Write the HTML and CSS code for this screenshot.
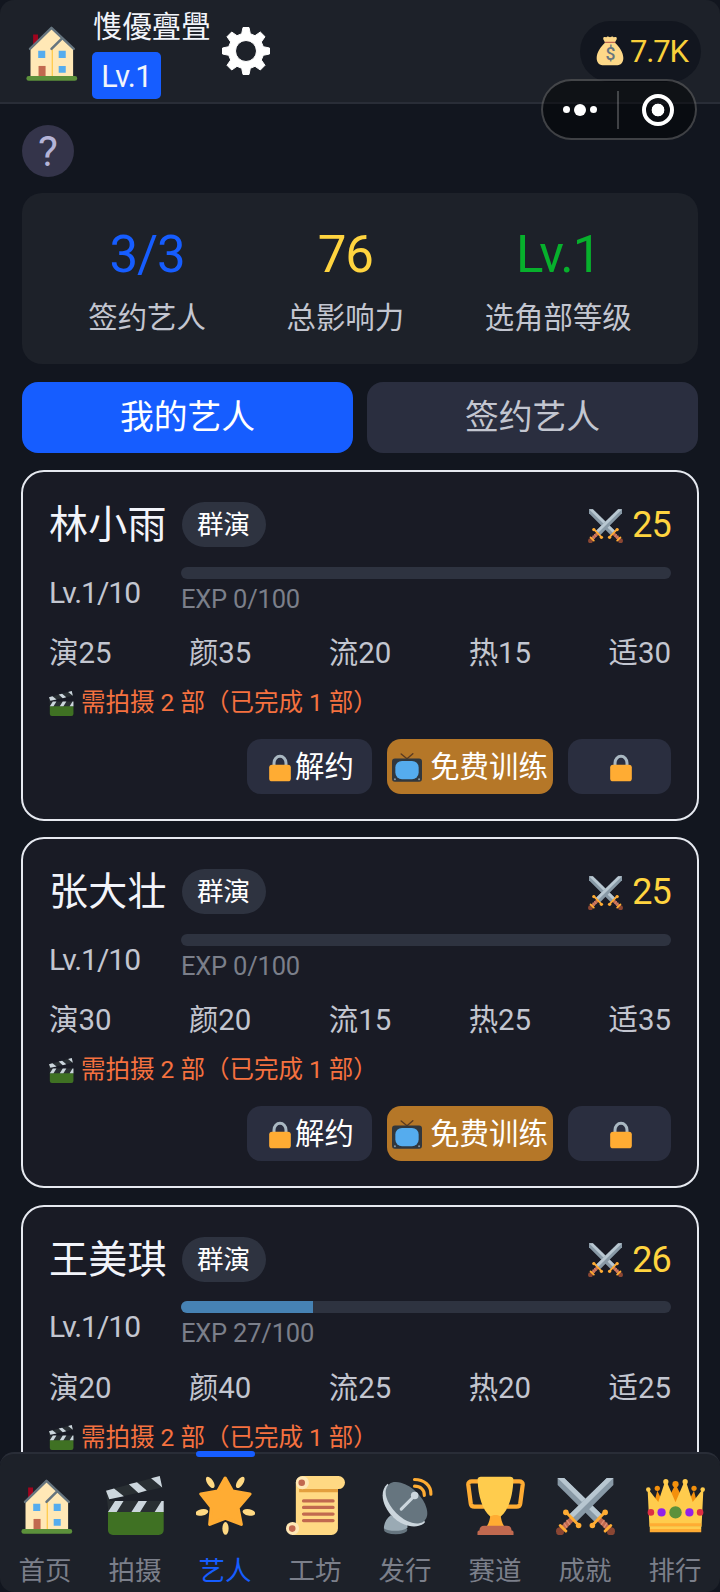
FILE: index.html
```html
<!DOCTYPE html>
<html lang="zh-CN">
<head>
  <meta charset="UTF-8">
  <meta name="viewport" content="width=device-width, initial-scale=1.0">
  <title>我的艺人</title>
  <link rel="stylesheet" href="styles.css">
</head>
<body>
  <!-- Icon set -->
  <svg class="sprite" aria-hidden="true">
    <symbol id="house" viewBox="0 0 36 36">
      <path fill="#A0041E" d="M7.4 7h3v7h-3z"/>
      <path fill="#FFE8B6" d="M5.8 15.5L18.6 3l13.2 12.500V33h-26z"/>
      <path fill="#FFCC4D" d="M18.700 16h.8v17h-.8z"/>
      <path fill="none" stroke="#66757F" stroke-width="1.500" stroke-linecap="round" stroke-linejoin="round" d="M5.500 15.800L18.600 3l13.600 12.800M18.600 15.800l6-6"/>
      <path fill="#55ACEE" d="M10.500 17h4.300v4.300h-4.300zM23 17h4.300v4.300H23zM23 26.200h4.300v4.200H23z"/>
      <path fill="#C1694F" d="M10.700 26.200H15V33h-4.300z"/>
      <rect fill="#5C913B" x="3.300" y="32.300" width="31" height="2.900" rx="1.400"/>
    </symbol>
    <symbol id="clapper" viewBox="0 0 36 36">
      <path fill="#3F7123" d="M1.200 21.500h34V33a3 3 0 0 1-3 3h-28a3 3 0 0 1-3-3z"/>
      <path fill="#292F33" d="M1.200 15.200h34V22h-34zM0 9L32.800 0l1.500 7L2 14.200 1.500 22z"/>
      <path fill="#CCD6DD" d="M1.200 21.900l4.300-6.700h5.200l-4.200 6.700zM15.500 21.900l4.300-6.700H25l-4.200 6.700zM29.700 21.900l4.200-6.700h1.300v6.700zM0 9l4.900-1.400 6 4.700L2 14.200zM13.900 5.100l5-1.300 6 5.100-5.100 1.400zM27.500 1.400L32.800 0l1.500 7z"/>
    </symbol>
    <symbol id="star" viewBox="0 0 36 36">
      <g fill="#FFD983">
        <ellipse cx="8.700" cy="3.900" rx="1.900" ry="3.900" transform="rotate(-33 8.700 3.900)"/>
        <ellipse cx="27" cy="3.900" rx="1.900" ry="3.900" transform="rotate(33 27 3.900)"/>
        <ellipse cx="3.600" cy="22.200" rx="3.900" ry="2" transform="rotate(-12 3.600 22.200)"/>
        <ellipse cx="32.300" cy="22.200" rx="3.900" ry="2" transform="rotate(12 32.300 22.200)"/>
        <ellipse cx="18" cy="32" rx="1.900" ry="3.900"/>
      </g>
      <path fill="#FFAC33" stroke="#FFAC33" stroke-width="2" stroke-linejoin="round" d="M17.800 1.300l4.500 8 10.600 1.700-7.300 8.500 2 10-9.700-3.800-9.500 3.800 1-10.500L3 11l10.300-1.700z"/>
    </symbol>
    <symbol id="scroll" viewBox="0 0 36 36">
      <path fill="#FFD983" d="M6 4a4 4 0 0 1 4-4h22a4 4 0 0 1 0 8h-.3v24a4 4 0 0 1-4 4H4a4 4 0 0 1 2-7z"/>
      <path fill="#E39F3D" d="M8 8h23.700v1.900H8z"/>
      <circle fill="#FFE8B6" cx="10" cy="4.100" r="4"/>
      <circle fill="#FFE8B6" cx="4" cy="32" r="4"/>
      <circle fill="#C1694F" cx="9.600" cy="4.100" r="2"/>
      <circle fill="#C1694F" cx="3.800" cy="32.100" r="2"/>
      <path stroke="#C1694F" stroke-width="2" stroke-linecap="round" d="M10.700 15.200h18M10.700 19.200h18M10.700 23.200h18M10.700 27.200h18"/>
    </symbol>
    <symbol id="dish" viewBox="0 0 36 36">
      <ellipse fill="#66757F" cx="12" cy="32.800" rx="7.200" ry="2.700"/>
      <path fill="#9AAAB4" d="M4.800 32c0-3 1.500-6 4.200-8l10.200 6v1.500c-3.500 2.500-11 2.500-14.400.5z"/>
      <path fill="#CCD6DD" d="M7 4.800C1.500 10 4.300 19 10.500 25.200 17 31.600 26.500 32.500 30 28z"/>
      <ellipse fill="#66757F" cx="18.600" cy="16.300" rx="15.600" ry="8.900" transform="rotate(45 18.600 16.300)"/>
      <path stroke="#CCD6DD" stroke-width="1.900" stroke-linecap="round" d="M15.400 20.200l8.300-8.300"/>
      <circle fill="#CCD6DD" cx="23.600" cy="11.900" r="2.300"/>
      <path fill="none" stroke="#FFAC33" stroke-width="1.900" stroke-linecap="round" d="M23.500 2.100c5.700 0 10.200 3.600 10 9M23.500 6.200c3.500 0 6.200 2 6 5.700"/>
    </symbol>
    <symbol id="trophy" viewBox="0 0 36 36">
      <path fill="none" stroke="#FFAC33" stroke-width="2.600" stroke-linejoin="round" d="M9 3.300H3.500c-1.300 0-2.200.8-2.100 2l1.500 11.500c.2 1.200 1 1.900 2.200 1.900H11M27 3.300h5.500c1.300 0 2.200.8 2.100 2l-1.500 11.500c-.2 1.200-1 1.900-2.200 1.900H25"/>
      <path fill="#FFAC33" d="M14.800 22h6.400c-.2 4 .8 6.500 2.300 9h-11c1.500-2.500 2.500-5 2.300-9z"/>
      <path fill="#FFCC4D" d="M9 .4h18c1.200 0 2 .6 1.900 2-.3 10-3 18.500-7.700 22.300-1.300-1.300-5.100-1.300-6.400 0C10.100 20.900 7.400 12.400 7.100 2.400 7 1 7.800.4 9 .4z"/>
      <path fill="#C1694F" d="M11 30.300h14c1.700 0 2.800 1 2.800 3h.2a1 1 0 0 1 1 1V36H7v-1.700a1 1 0 0 1 1-1h.2c0-2 1.100-3 2.800-3z"/>
    </symbol>
    <g id="sword">
      <path fill="#8899A6" d="M35 1.200v4.300L12.200 28.200 7.800 23.800 31 1.200z"/>
      <path fill="#B8C7D1" d="M35 1.200L10 26l-2.200-2.200L31 1.200z"/>
      <path stroke="#C1694F" stroke-width="3.200" d="M10.500 25.500l-7.500 7.500"/>
      <path stroke="#DD8F74" stroke-width=".8" d="M6.500 26.800l2 3M4.800 28.500l2 3"/>
      <circle fill="#8A4633" cx="2.500" cy="33.700" r="2.500"/>
      <path stroke="#FFAC33" stroke-width="1.800" stroke-linecap="round" d="M6.100 22l7.700 8M2.600 30.200l3.400 3.400"/>
      <circle fill="#FFAC33" cx="6" cy="22.200" r="1.700"/>
      <circle fill="#FFAC33" cx="13.800" cy="30.200" r="1.700"/>
    </g>
    <symbol id="swords" viewBox="0 0 36 36">
      <use href="#sword" transform="matrix(-1 0 0 1 36 0)"/>
      <use href="#sword"/>
    </symbol>
    <symbol id="crown" viewBox="0 0 36 36">
      <path fill="#F4900C" d="M4 20L6.900 9l4.500 9L18 5l6.600 13 4.700-9L32 20z"/>
      <g fill="#F4900C"><circle cx="6.900" cy="7.500" r="1.600"/><circle cx="18" cy="5" r="1.900"/><circle cx="29.300" cy="7.500" r="1.600"/></g>
      <path fill="#FFCC4D" d="M1 8.500h.8L7.500 15.800l4.100-12.500h1L18 16l5.400-12.700h1l4.100 12.500 5.700-7.300h.8L33.900 31H2.100z"/>
      <g fill="#FFCC4D"><circle cx="1.400" cy="8.300" r="1.400"/><circle cx="12.100" cy="3.500" r="1.600"/><circle cx="23.900" cy="3.500" r="1.600"/><circle cx="34.600" cy="8.300" r="1.400"/></g>
      <path fill="#FFAC33" d="M2.300 28.900h31.400v1.700H2.300zM2.300 32.400h31.400v1.900H2.300z"/>
      <path fill="#FFCC4D" d="M2.300 30.600h31.400v1.800H2.300z"/>
      <circle fill="#5C913B" cx="18" cy="22.200" r="3.800"/>
      <g fill="#9220E8"><circle cx="9.500" cy="22.200" r="2.500"/><circle cx="26.500" cy="22.200" r="2.500"/></g>
      <g fill="#DD2E44"><circle cx="3" cy="22.200" r="2"/><circle cx="33" cy="22.200" r="2"/></g>
    </symbol>
    <symbol id="lock" viewBox="0 0 36 36">
      <path fill="none" stroke="#AAB8C2" stroke-width="3.600" d="M10.800 17v-5a7.200 8 0 0 1 14.400 0v5"/>
      <rect fill="#FFAC33" x="5" y="14" width="26" height="20" rx="3.500"/>
    </symbol>
    <symbol id="tv" viewBox="0 0 36 36">
      <path stroke="#5B3B22" stroke-width="1.600" stroke-linecap="round" d="M18 7L11 1.200M18 7l7-6.200"/>
      <rect fill="#31373D" y="6.500" width="36" height="28" rx="3.500"/>
      <rect fill="#55ACEE" x="4" y="9.500" width="28" height="22" rx="8"/>
      <circle fill="#8899A6" cx="3.500" cy="31.500" r="1.200"/>
      <circle fill="#8899A6" cx="32.500" cy="31.500" r="1.200"/>
    </symbol>
    <symbol id="gear" viewBox="0 0 48 48">
      <path fill="#fff" stroke="#fff" stroke-linejoin="round" fill-rule="evenodd" d="M21 .5h6l1.300 6.200 4.700 2L38.300 5l4.700 4.700-3.700 5.300 2 4.700 6.200 1.300v6l-6.200 1.300-2 4.700 3.700 5.300-4.700 4.700-5.300-3.700-4.700 2L27 47.500h-6l-1.300-6.200-4.700-2L9.700 43 5 38.300 8.700 33l-2-4.700L.5 27v-6l6.200-1.300 2-4.700L5 9.700 9.700 5 15 8.700l4.700-2zM24 13.500a10.500 10.500 0 1 0 0 21 10.500 10.500 0 0 0 0-21z"/>
    </symbol>
  </svg>

  <div class="app">
    <header class="header">
      <svg class="icon-house"><use href="#house"/></svg>
      <div class="player">
        <div class="player-name">愯優亹舋</div>
        <div class="player-level">Lv.1</div>
      </div>
      <svg class="icon-gear"><use href="#gear"/></svg>
      <div class="money">
        <svg class="icon-bag" viewBox="0 0 36 36">
          <path fill="#FDD888" d="M12 8c-.5-2.500-3-4-2-6 1-1.500 3 0 4-.8 1-.8 2.200-.7 4 .3 1.800-1 3-1.100 4-.3 1 .8 3-.7 4 .8 1 2-1.500 3.500-2 6 5 4.500 10 11.500 10 18.500 0 5-2.500 8.500-7 8.500H9c-4.500 0-7-3.500-7-8.500C2 19.500 7 12.500 12 8z"/>
          <path stroke="#BF6952" stroke-width="1.600" stroke-linecap="round" d="M12.500 7.700h11"/>
          <text class="bag-sign" x="18" y="29">$</text>
        </svg>
        <span>7.7K</span>
      </div>
    </header>

    <!-- Mini program capsule, floats over the header -->
    <div class="capsule">
      <div class="dots"><i></i><i class="big"></i><i></i></div>
      <div class="target"></div>
    </div>

    <main class="content">
      <div class="help">?</div>

      <section class="stats">
        <div class="stat"><div class="stat-value blue">3/3</div><div class="stat-label">签约艺人</div></div>
        <div class="stat"><div class="stat-value yellow">76</div><div class="stat-label">总影响力</div></div>
        <div class="stat"><div class="stat-value green">Lv.1</div><div class="stat-label">选角部等级</div></div>
      </section>

      <div class="tabs">
        <div class="tab active">我的艺人</div>
        <div class="tab">签约艺人</div>
      </div>

      <div class="artist-list">
        <article class="artist">
          <div class="artist-top">
            <span class="artist-name">林小雨</span><span class="rank">群演</span>
            <span class="power"><svg><use href="#swords"/></svg>25</span>
          </div>
          <div class="artist-exp">
            <span class="level">Lv.1/10</span>
            <div class="exp"><div class="bar"></div><div class="exp-text">EXP 0/100</div></div>
          </div>
          <div class="attrs"><span>演25</span><span>颜35</span><span>流20</span><span>热15</span><span>适30</span></div>
          <div class="note"><svg><use href="#clapper"/></svg>需拍摄 2 部（已完成 1 部）</div>
          <div class="actions">
            <div class="btn fire"><svg><use href="#lock"/></svg>解约</div>
            <div class="btn train"><svg><use href="#tv"/></svg>免费训练</div>
            <div class="btn locked"><svg><use href="#lock"/></svg></div>
          </div>
        </article>

        <article class="artist">
          <div class="artist-top">
            <span class="artist-name">张大壮</span><span class="rank">群演</span>
            <span class="power"><svg><use href="#swords"/></svg>25</span>
          </div>
          <div class="artist-exp">
            <span class="level">Lv.1/10</span>
            <div class="exp"><div class="bar"></div><div class="exp-text">EXP 0/100</div></div>
          </div>
          <div class="attrs"><span>演30</span><span>颜20</span><span>流15</span><span>热25</span><span>适35</span></div>
          <div class="note"><svg><use href="#clapper"/></svg>需拍摄 2 部（已完成 1 部）</div>
          <div class="actions">
            <div class="btn fire"><svg><use href="#lock"/></svg>解约</div>
            <div class="btn train"><svg><use href="#tv"/></svg>免费训练</div>
            <div class="btn locked"><svg><use href="#lock"/></svg></div>
          </div>
        </article>

        <article class="artist">
          <div class="artist-top">
            <span class="artist-name">王美琪</span><span class="rank">群演</span>
            <span class="power"><svg><use href="#swords"/></svg>26</span>
          </div>
          <div class="artist-exp">
            <span class="level">Lv.1/10</span>
            <div class="exp"><div class="bar"><div class="fill" style="width: 27%"></div></div><div class="exp-text">EXP 27/100</div></div>
          </div>
          <div class="attrs"><span>演20</span><span>颜40</span><span>流25</span><span>热20</span><span>适25</span></div>
          <div class="note"><svg><use href="#clapper"/></svg>需拍摄 2 部（已完成 1 部）</div>
        </article>
      </div>
    </main>

    <nav class="nav">
      <div class="nav-item"><svg><use href="#house"/></svg>首页</div>
      <div class="nav-item"><svg><use href="#clapper"/></svg>拍摄</div>
      <div class="nav-item active"><svg><use href="#star"/></svg>艺人</div>
      <div class="nav-item"><svg><use href="#scroll"/></svg>工坊</div>
      <div class="nav-item"><svg><use href="#dish"/></svg>发行</div>
      <div class="nav-item"><svg><use href="#trophy"/></svg>赛道</div>
      <div class="nav-item"><svg><use href="#swords"/></svg>成就</div>
      <div class="nav-item"><svg><use href="#crown"/></svg>排行</div>
    </nav>
  </div>
</body>
</html>
```
FILE: styles.css
```css
* {
  box-sizing: border-box;
  margin: 0;
  padding: 0;
}

body {
  background: #12161f;
  color: #f2f4fa;
  font-family: Roboto, "Noto Sans CJK SC", sans-serif;
  font-size: 29.4px;
}

svg {
  display: block;
  flex: none;
}

.sprite {
  position: absolute;
  width: 0;
  height: 0;
}

.bag-sign {
  font-size: 21px;
  font-weight: 500;
  text-anchor: middle;
  fill: #67757f;
}

.app {
  position: relative;
  width: 720px;
  height: 1592px;
  display: flex;
  flex-direction: column;
  overflow: hidden;
}

/* Header */
.header {
  height: 104px;
  flex: none;
  display: flex;
  align-items: center;
  padding: 0 19px 0 21px;
  background: #1d2129;
  border-bottom: 2px solid #292d37;
  border-radius: 14px 14px 0 0;
}

.icon-house {
  width: 59px;
  height: 59px;
  margin-top: 2px;
}

.player {
  margin-left: 12px;
  align-self: flex-start;
  padding-top: 8px;
}

.player-name {
  line-height: 38px;
  white-space: nowrap;
  padding-left: 1px;
}

.player-level {
  width: 69px;
  height: 47px;
  margin-top: 6px;
  line-height: 49px;
  text-align: center;
  background: #165dff;
  border-radius: 5px;
  font-size: 30.500px;
  letter-spacing: -0.6px;
}

.icon-gear {
  width: 48px;
  height: 48px;
  margin-left: 11px;
}

.money {
  width: 121px;
  height: 61px;
  margin-left: auto;
  padding-left: 15px;
  display: flex;
  align-items: center;
  gap: 5px;
  color: #f9d03a;
  background: #12161f;
  border-radius: 31px;
  font-size: 31px;
  line-height: 36px;
  letter-spacing: -1.2px;
}

.money span {
  padding-top: 2px;
}

.icon-bag {
  width: 30px;
  height: 30px;
}

/* Capsule */
.capsule {
  position: absolute;
  left: 541px;
  top: 79px;
  width: 156px;
  height: 61px;
  display: grid;
  grid-template-columns: 1fr 1fr;
  align-items: center;
  justify-items: center;
  background: rgba(0, 0, 0, 0.45);
  border: 2px solid rgba(255, 255, 255, 0.22);
  border-radius: 31px;
}

.dots {
  width: 100%;
  height: 38px;
  display: flex;
  align-items: center;
  justify-content: center;
  gap: 4px;
  border-right: 2px solid rgba(255, 255, 255, 0.22);
}

.dots i {
  width: 7px;
  height: 7px;
  background: #fff;
  border-radius: 50%;
}

.dots .big {
  width: 12px;
  height: 12px;
}

.target {
  width: 32px;
  height: 32px;
  margin-left: 2px;
  border: 4px solid #fff;
  border-radius: 50%;
  background: radial-gradient(circle, #fff 6px, transparent 6.7px);
}

/* Content */
.content {
  flex: 1;
  min-height: 0;
  overflow: hidden;
  padding: 21px 22px 0;
}

.help {
  width: 52px;
  height: 52px;
  line-height: 54px;
  text-align: center;
  font-size: 42px;
  color: #b5b4d8;
  background: #34344a;
  border-radius: 50%;
}

.stats {
  height: 171px;
  margin-top: 16px;
  padding: 31px 26px 0;
  display: flex;
  justify-content: space-around;
  background: #1d2129;
  border-radius: 20px;
}

.stat {
  text-align: center;
}

.stat-value {
  height: 62px;
  line-height: 62px;
  font-size: 51px;
  letter-spacing: -1px;
}

.stat-label {
  line-height: 40px;
  margin-top: 12px;
  color: #c3c6d0;
}

.blue { color: #165dff; }
.yellow { color: #ffd43f; }
.green { color: #07b02c; }

.tabs {
  display: flex;
  gap: 14px;
  margin-top: 18px;
}

.tab {
  flex: 1;
  height: 71px;
  line-height: 71px;
  text-align: center;
  font-size: 33.800px;
  color: #c3c6d0;
  background: #2a2e3f;
  border-radius: 16px;
}

.tab.active {
  color: #fff;
  background: #165dff;
}

/* Artist cards */
.artist-list {
  display: flex;
  flex-direction: column;
  gap: 16.4px;
  margin: 17px -1px 0;
}

.artist {
  height: 351px;
  flex: none;
  padding: 30px 26px 0;
  background: #191b25;
  border: 2px solid #e6e9f0;
  border-radius: 23px;
}

.artist-top {
  display: flex;
  align-items: center;
  height: 45px;
}

.artist-name {
  font-size: 39px;
  letter-spacing: 0.2px;
  line-height: 45px;
  padding-top: 2px;
}

.rank {
  width: 84px;
  height: 45px;
  line-height: 46px;
  margin-left: 15px;
  text-align: center;
  font-size: 26.500px;
  color: #fff;
  background: #2e3340;
  border-radius: 23px;
}

.power {
  display: flex;
  align-items: center;
  gap: 9px;
  margin-left: auto;
  padding-top: 1px;
  font-size: 36px;
  line-height: 44px;
  letter-spacing: -0.8px;
  color: #ffd43f;
}

.power svg {
  width: 35px;
  height: 35px;
}

.artist-exp {
  display: flex;
  align-items: center;
  height: 47px;
  margin-top: 20px;
}

.level {
  width: 132px;
  line-height: 36px;
  padding-top: 4px;
  font-size: 30px;
  letter-spacing: -1px;
  color: #c3c6d0;
}

.exp {
  flex: 1;
}

.bar {
  height: 12px;
  overflow: hidden;
  background: #2e3340;
  border-radius: 6px;
}

.fill {
  height: 100%;
  background: #4682b4;
}

.exp-text {
  margin-top: 5px;
  line-height: 31px;
  font-size: 25.500px;
  letter-spacing: -0.2px;
  color: #7b7f8a;
}

.attrs {
  display: flex;
  justify-content: space-between;
  margin-top: 21px;
  line-height: 37px;
  height: 36px;
  color: #c3c6d0;
}

.note {
  display: flex;
  align-items: center;
  gap: 7px;
  height: 30px;
  margin-top: 17px;
  font-size: 24.500px;
  line-height: 30px;
  white-space: nowrap;
  color: #f5713f;
}

.note svg {
  width: 25px;
  height: 25px;
}

.actions {
  display: flex;
  justify-content: flex-end;
  gap: 15px;
  margin-top: 21px;
}

.btn {
  height: 55px;
  display: flex;
  align-items: center;
  justify-content: center;
  line-height: 30px;
  color: #fff;
  background: #2a2e3f;
  border-radius: 14px;
  white-space: nowrap;
}

.btn svg {
  width: 30px;
  height: 30px;
  margin-top: 2px;
}

.fire {
  width: 125px;
}

.train {
  width: 166px;
  gap: 8px;
  background: #b57728;
}

.locked {
  width: 103px;
  padding-left: 3px;
}

/* Bottom navigation */
.nav {
  height: 140px;
  flex: none;
  display: grid;
  grid-template-columns: repeat(8, 1fr);
  background: #1d2129;
  border-top: 2px solid #292d37;
  border-radius: 14px;
}

.nav-item {
  position: relative;
  display: flex;
  flex-direction: column;
  align-items: center;
  gap: 17px;
  padding-top: 22px;
  font-size: 26.500px;
  line-height: 37px;
  color: #7b7f8a;
}

.nav-item svg {
  width: 59px;
  height: 59px;
}

.nav-item.active {
  color: #165dff;
}

.nav-item.active::before {
  content: "";
  position: absolute;
  top: -3px;
  left: 16px;
  width: 59px;
  height: 6px;
  background: #165dff;
  border-radius: 3px;
}
```
